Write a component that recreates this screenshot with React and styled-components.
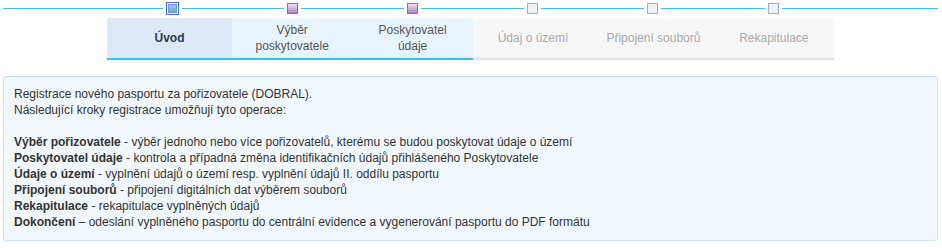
import styled, { createGlobalStyle } from "styled-components";

const GlobalStyle = createGlobalStyle`
  body {
    margin: 0;
    padding: 0 4px 0 3px;
    background: #fff;
    font-family: "Liberation Sans", Arial, sans-serif;
    font-size: 12px;
    color: #333;
  }
`;

const steps = [
  { label: ["Úvod"], state: "current" },
  { label: ["Výběr", "poskytovatele"], state: "done" },
  { label: ["Poskytovatel", "údaje"], state: "done" },
  { label: ["Údaj o území"], state: "todo" },
  { label: ["Připojení souborů"], state: "todo" },
  { label: ["Rekapitulace"], state: "todo" },
];

const rows = [
  ["Výběr pořizovatele", " - výběr jednoho nebo více pořizovatelů, kterému se budou poskytovat údaje o území"],
  ["Poskytovatel údaje", " - kontrola a případná změna identifikačních údajů přihlášeného Poskytovatele"],
  ["Údaje o území", " - vyplnění údajů o území resp. vyplnění údajů II. oddílu pasportu"],
  ["Připojení souborů", " - připojení digitálních dat výběrem souborů"],
  ["Rekapitulace", " - rekapitulace vyplněných údajů"],
  ["Dokončení", " – odeslání vyplněného pasportu do centrální evidence a vygenerování pasportu do PDF formátu"],
];

const Wizard = styled.div`
  display: flex;
  flex-direction: column;
`;

const Track = styled.div`
  display: flex;
  align-items: center;
  height: 16px;
`;

const Line = styled.div`
  height: 1px;
  background: #3fbaee;
  flex: ${(p) => (p.$fixed ? `0 0 ${p.$fixed}px` : "1")};
`;

const Cell = styled.div`
  flex: 0 0 120.2px;
  display: flex;
  align-items: center;
  gap: 3px;
`;

const Marker = styled.div`
  flex: none;
  box-sizing: border-box;
  ${(p) =>
    p.$state === "current"
      ? `
    width: 13px;
    height: 13px;
    border: 1.5px solid #3a6fd0;
    padding: 1px;
    background: #fff;
    &::after {
      content: "";
      display: block;
      width: 100%;
      height: 100%;
      background: linear-gradient(#a9c9f0, #6f9fe0);
      box-shadow: inset 0 0 0 1px #6b98d8;
    }
  `
      : p.$state === "done"
      ? `
    width: 11px;
    height: 11px;
    border: 1px solid #9a62ae;
    background: linear-gradient(#f0e2f4, #b27fc4);
  `
      : `
    width: 11px;
    height: 11px;
    border: 1px solid #a4acb6;
    background: #eef1f5;
  `}
`;

const Tabs = styled.div`
  display: flex;
  margin: 2px 0 0 104px;
  width: 727px;
`;

const Tab = styled.div`
  flex: ${(p) => (p.$first ? "0 0 125px" : "1")};
  height: 40px;
  display: flex;
  flex-direction: column;
  align-items: center;
  justify-content: center;
  white-space: nowrap;
  line-height: 16px;
  background: ${(p) =>
    p.$state === "current" ? "#dbe9f8" : p.$state === "done" ? "#e8f4fd" : "#f7f7f7"};
  border-bottom: 2px solid ${(p) => (p.$state === "todo" ? "#e2e2e2" : "#3fbaee")};
  color: ${(p) => (p.$state === "current" ? "#2f3a4a" : p.$state === "done" ? "#555" : "#aaa")};
  font-weight: ${(p) => (p.$state === "current" ? "bold" : "normal")};
`;

const InfoBox = styled.div`
  margin-top: 16px;
  background: #f0f8fd;
  border: 1px solid #c4e3f4;
  border-radius: 3px;
  padding: 9px 10px 10px;
  line-height: 16px;
  color: #333;
`;

const Gap = styled.div`
  height: 16px;
`;

export default function App() {
  return (
    <>
      <GlobalStyle />
      <Wizard>
        <Track>
          <Line $fixed={109} />
          {steps.map((s) => (
            <Cell key={s.label.join(" ")}>
              <Line />
              <Marker $state={s.state} />
              <Line />
            </Cell>
          ))}
          <Line />
        </Track>
        <Tabs>
          {steps.map((s, i) => (
            <Tab key={s.label.join(" ")} $state={s.state} $first={i === 0}>
              {s.label.map((part) => (
                <span key={part}>{part}</span>
              ))}
            </Tab>
          ))}
        </Tabs>
      </Wizard>
      <InfoBox>
        Registrace nového pasportu za pořizovatele (DOBRAL).
        <br />
        Následující kroky registrace umožňují tyto operace:
        <Gap />
        {rows.map(([b, t]) => (
          <div key={b}>
            <b>{b}</b>
            {t}
          </div>
        ))}
      </InfoBox>
    </>
  );
}
